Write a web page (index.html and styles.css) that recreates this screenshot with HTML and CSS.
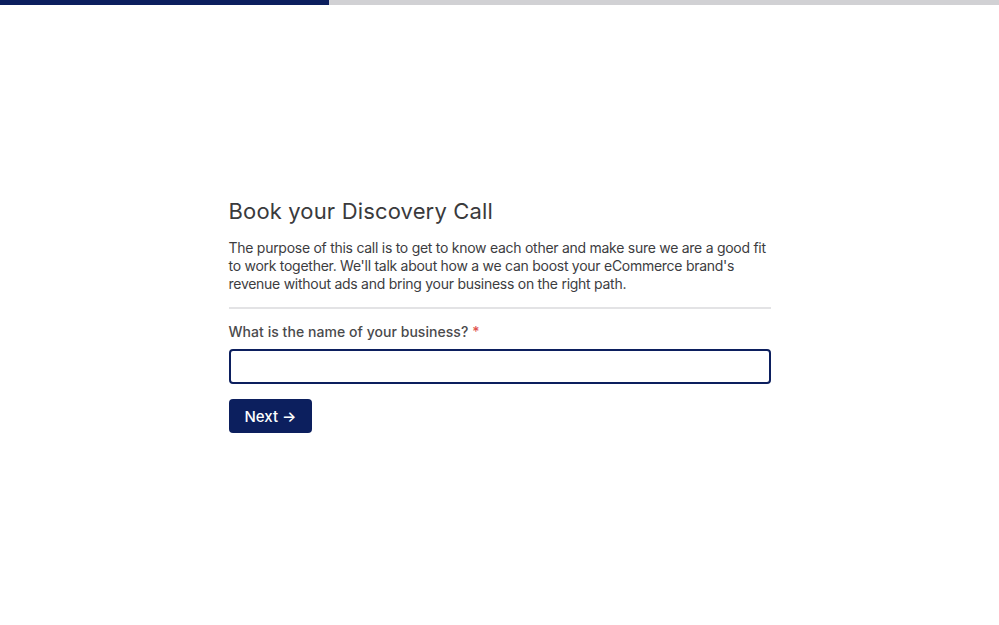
FILE: index.html
```html
<!DOCTYPE html>
<html>
<head>
<meta charset="utf-8">
<link rel="stylesheet" href="styles.css">
</head>
<body>
<div class="progress"><div class="progress-fill"></div></div>
<main class="form">
  <h1 class="title">Book your Discovery Call</h1>
  <p class="desc">The purpose of this call is to get to know each other and make sure we are a good fit to work together. We'll talk about how a we can boost your eCommerce brand's revenue without ads and bring your business on the right path.</p>
  <hr class="divider">
  <label class="label" for="biz">What is the name of your business? <span class="req">*</span></label>
  <input id="biz" class="input" type="text">
  <button class="btn">Next →</button>
</main>
</body>
</html>
```
FILE: styles.css
```css
html, body { margin: 0; padding: 0; background: #fff; }
body { font-family: Inter, "Noto Sans", sans-serif; color: #3d3d3f; }
.progress { height: 5px; background: #d1d1d4; display: flex; }
.progress-fill { width: 329px; background: #0c1f5e; }
.form { width: 542px; margin: 0 auto; padding-top: 192px; box-sizing: content-box; }
.title { font-size: 22px; font-weight: 400; line-height: 28px; margin: 0 0 14px; color: #3a3a3c; letter-spacing: 0.15px; }
.desc { font-size: 14px; line-height: 18px; margin: 0 0 14px; color: #3d3d3f; letter-spacing: -0.27px; }
.divider { border: 0; height: 2px; background: #e3e3e5; margin: 0 0 14px; }
.label { display: block; font-size: 14px; font-weight: 500; line-height: 18px; color: #4a4a4c; margin-bottom: 8px; letter-spacing: 0.05px; }
.req { color: #e0534f; }
.input { display: block; width: 100%; box-sizing: border-box; height: 35px; border: 2px solid #0c1f5e; border-radius: 4px; margin: 0 0 15px; font: inherit; outline: none; }
.btn { display: block; background: #0c1f5e; color: #fff; border: 0; border-radius: 4px; height: 34px; padding: 0 16px; font-family: inherit; font-size: 15px; font-weight: 500; cursor: pointer; }
```
